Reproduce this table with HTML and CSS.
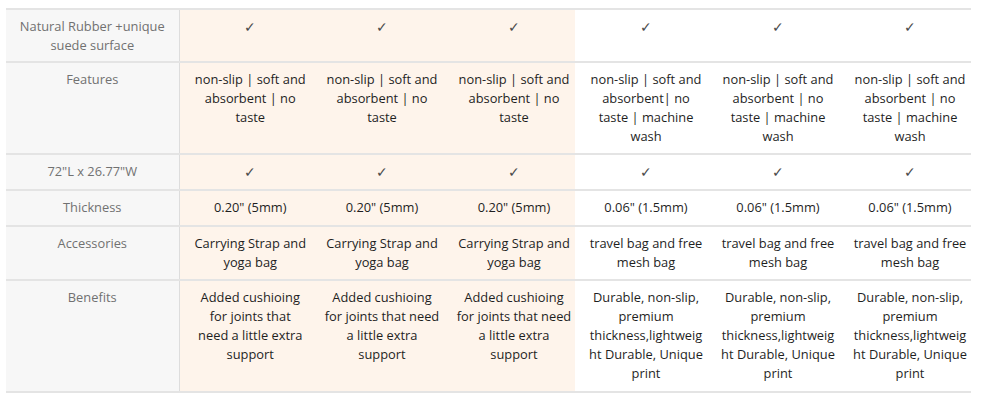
FILE: index.html
```html
<!DOCTYPE html>
<html>
<head>
<meta charset="utf-8">
<link rel="stylesheet" href="styles.css">
</head>
<body>
<table class="compare">
  <colgroup>
    <col class="c-head">
    <col class="c-data"><col class="c-data"><col class="c-data">
    <col class="c-data"><col class="c-data"><col class="c-data">
  </colgroup>
  <tbody>
    <tr class="first">
      <th>Natural Rubber +unique<br>suede surface</th>
      <td class="hl"><span class="check">✓</span></td>
      <td class="hl"><span class="check">✓</span></td>
      <td class="hl"><span class="check">✓</span></td>
      <td><span class="check">✓</span></td>
      <td><span class="check">✓</span></td>
      <td><span class="check">✓</span></td>
    </tr>
    <tr>
      <th>Features</th>
      <td class="hl">non-slip | soft and<br>absorbent | no<br>taste</td>
      <td class="hl">non-slip | soft and<br>absorbent | no<br>taste</td>
      <td class="hl">non-slip | soft and<br>absorbent | no<br>taste</td>
      <td>non-slip | soft and<br>absorbent| no<br>taste | machine<br>wash</td>
      <td>non-slip | soft and<br>absorbent | no<br>taste | machine<br>wash</td>
      <td>non-slip | soft and<br>absorbent | no<br>taste | machine<br>wash</td>
    </tr>
    <tr class="single">
      <th>72"L x 26.77"W</th>
      <td class="hl"><span class="check">✓</span></td>
      <td class="hl"><span class="check">✓</span></td>
      <td class="hl"><span class="check">✓</span></td>
      <td><span class="check">✓</span></td>
      <td><span class="check">✓</span></td>
      <td><span class="check">✓</span></td>
    </tr>
    <tr class="single">
      <th>Thickness</th>
      <td class="hl">0.20" (5mm)</td>
      <td class="hl">0.20" (5mm)</td>
      <td class="hl">0.20" (5mm)</td>
      <td>0.06" (1.5mm)</td>
      <td>0.06" (1.5mm)</td>
      <td>0.06" (1.5mm)</td>
    </tr>
    <tr>
      <th>Accessories</th>
      <td class="hl">Carrying Strap and<br>yoga bag</td>
      <td class="hl">Carrying Strap and<br>yoga bag</td>
      <td class="hl">Carrying Strap and<br>yoga bag</td>
      <td>travel bag and free<br>mesh bag</td>
      <td>travel bag and free<br>mesh bag</td>
      <td>travel bag and free<br>mesh bag</td>
    </tr>
    <tr class="tall">
      <th>Benefits</th>
      <td class="hl">Added cushioing<br>for joints that<br>need a little extra<br>support</td>
      <td class="hl">Added cushioing<br>for joints that need<br>a little extra<br>support</td>
      <td class="hl">Added cushioing<br>for joints that need<br>a little extra<br>support</td>
      <td>Durable, non-slip,<br>premium<br>thickness,lightweig<br>ht Durable, Unique<br>print</td>
      <td>Durable, non-slip,<br>premium<br>thickness,lightweig<br>ht Durable, Unique<br>print</td>
      <td>Durable, non-slip,<br>premium<br>thickness,lightweig<br>ht Durable, Unique<br>print</td>
    </tr>
  </tbody>
</table>
</body>
</html>
```

FILE: styles.css
```css
html, body {
  margin: 0;
  background: #ffffff;
}

body {
  padding: 8px 0 0 6px;
  font-family: "Open Sans", "Noto Sans", sans-serif;
  font-size: 12.85px;
  line-height: 19px;
  color: #1f1f1f;
}

.compare {
  border-collapse: collapse;
  table-layout: fixed;
  width: 965px;
}

.c-head { width: 173px; }
.c-data { width: 132px; }

.compare th,
.compare td {
  border-top: 2px solid #e4e4e4;
  border-bottom: 2px solid #e4e4e4;
  vertical-align: top;
  text-align: center;
  padding: 7px 2px 7px 12px;
  white-space: nowrap;
}

.compare .first th,
.compare .first td {
  padding-bottom: 6px;
}

.compare .single th,
.compare .single td,
.compare .tall th,
.compare .tall td {
  padding-bottom: 8px;
}

.compare th {
  font-weight: normal;
  color: #717171;
  background: #f7f7f7;
  border-right: 1px solid #dddddd;
  padding-left: 4px;
  padding-right: 4px;
}

.compare td.hl {
  background: #fef4eb;
}

.check {
  display: inline-block;
  vertical-align: top;
  height: 19px;
  line-height: 19px;
  color: #4a4a4a;
  font-size: 14px;
}
```
